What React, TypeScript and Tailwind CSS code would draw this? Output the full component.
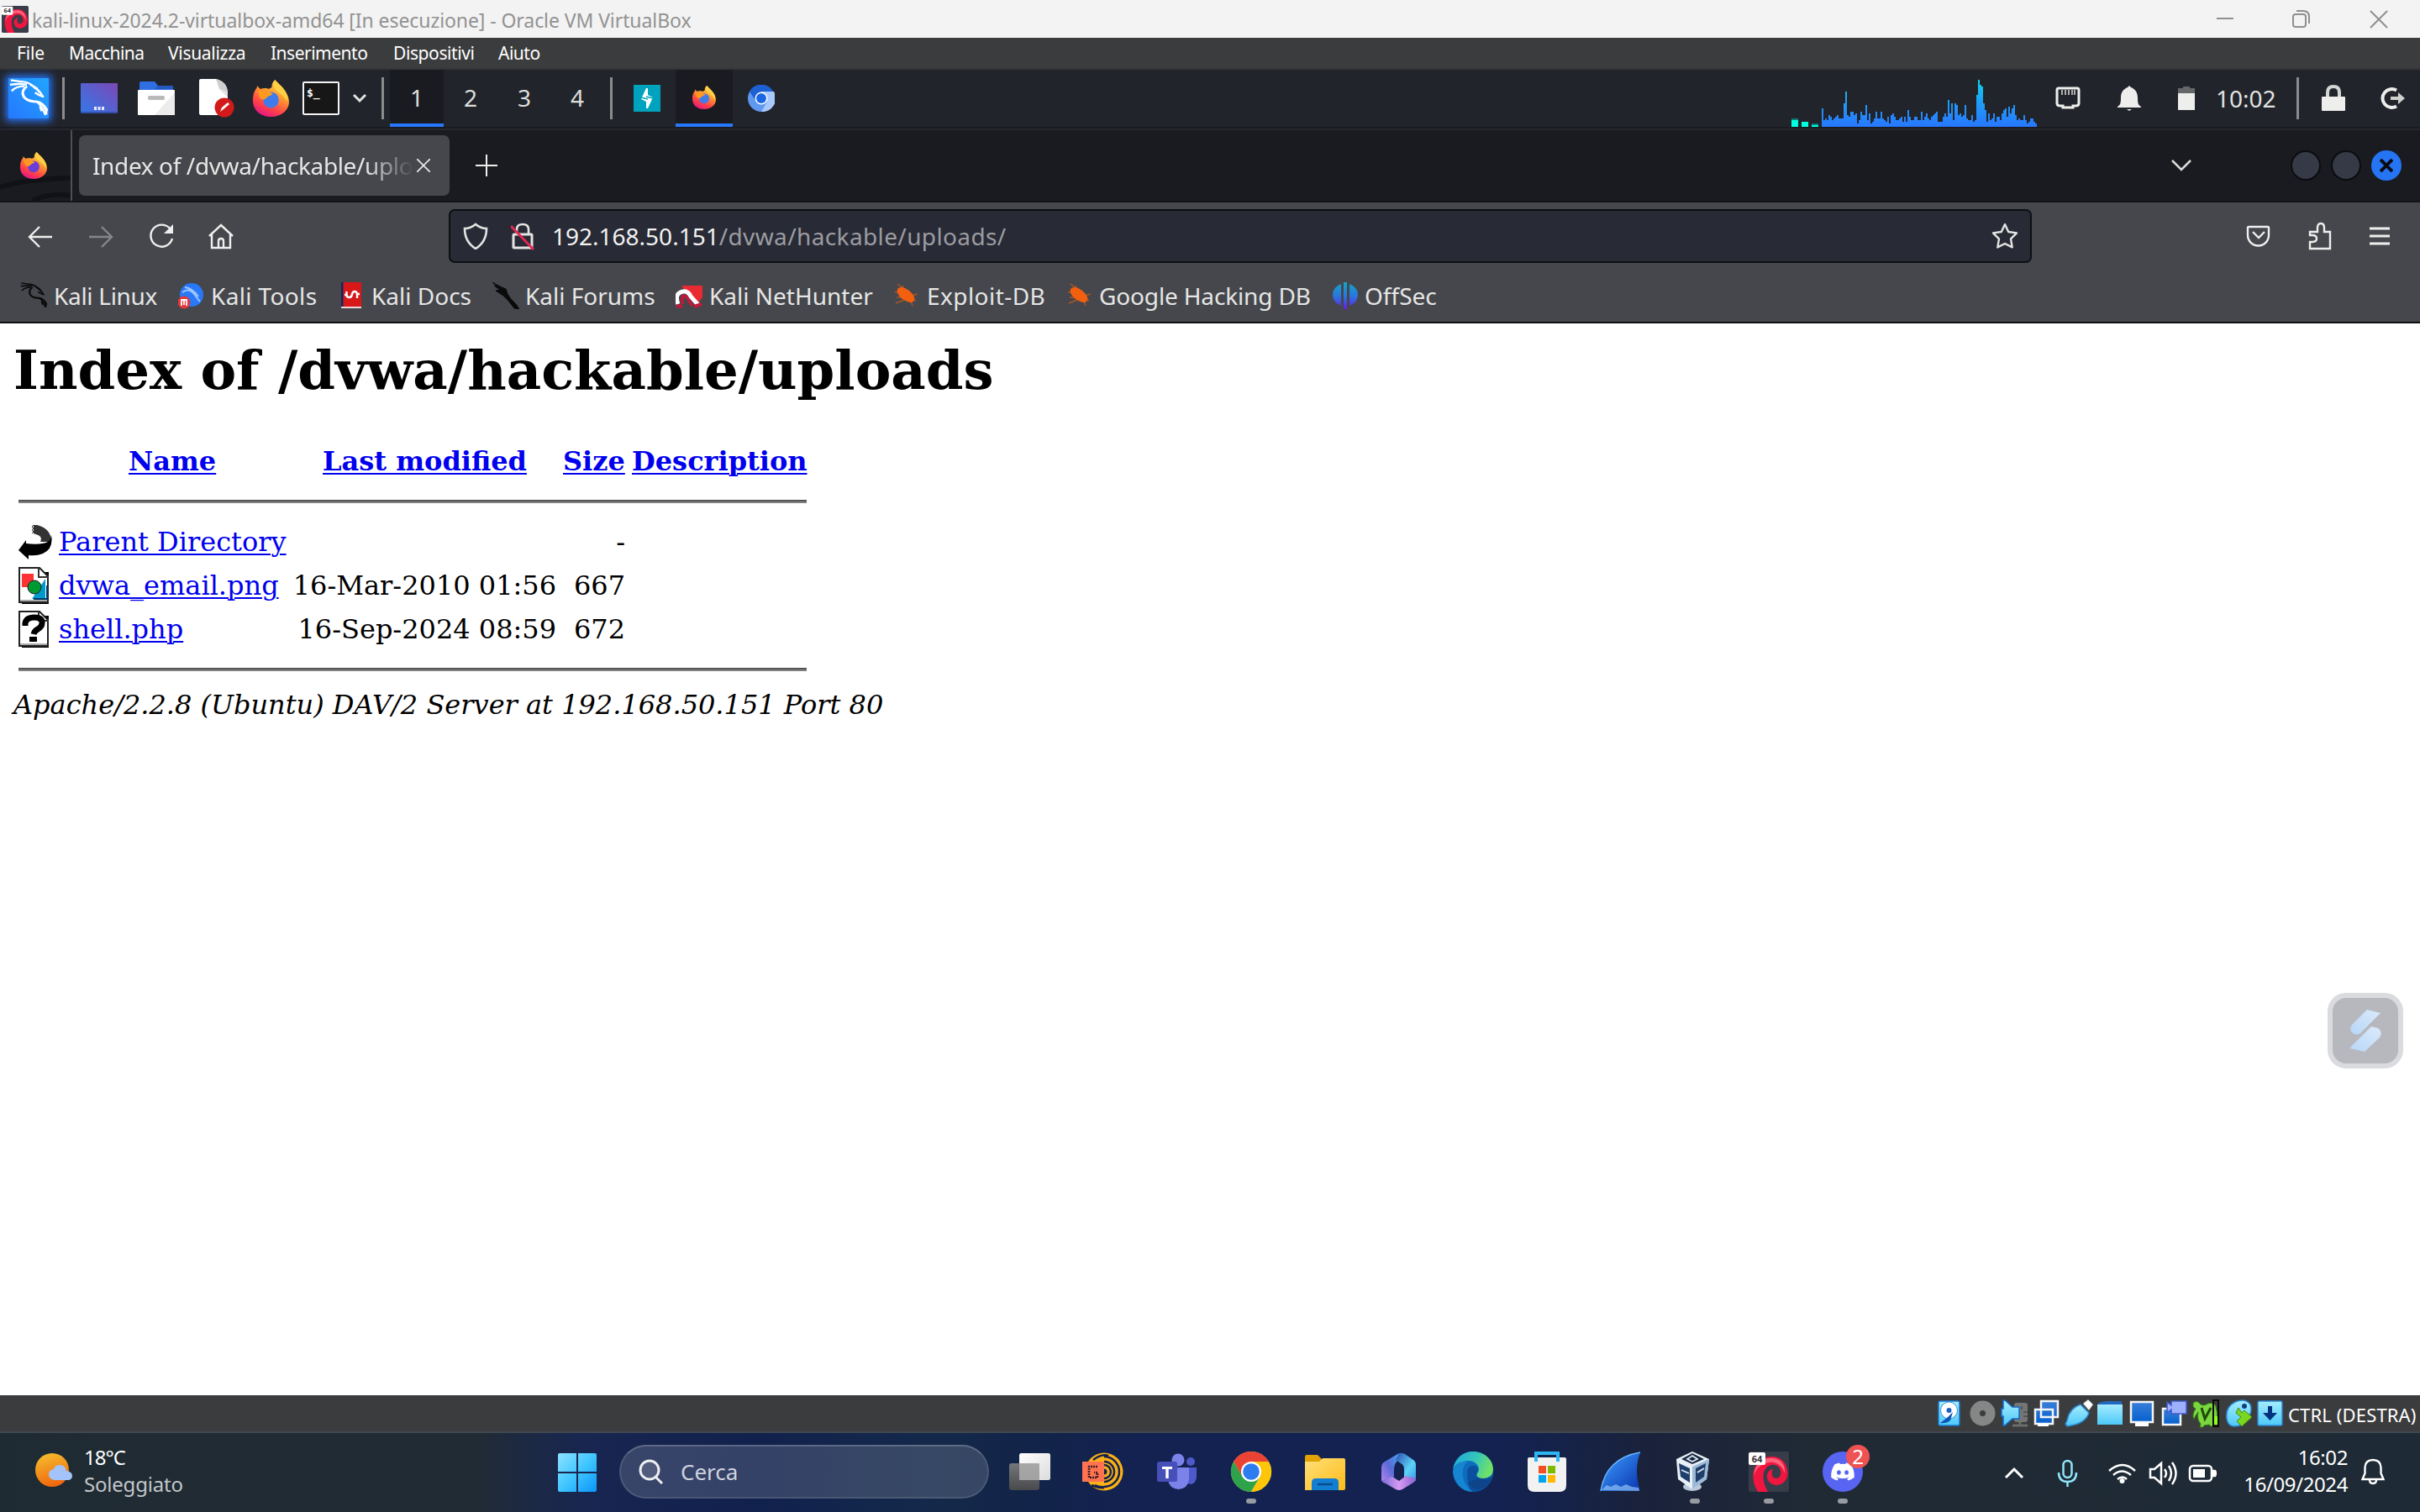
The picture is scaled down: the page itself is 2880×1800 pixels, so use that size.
import React from "react";
import { FaDiscord } from "react-icons/fa6";

const ui = "font-['Noto_Sans','Open_Sans',sans-serif]";

function Firefox({ className, core = "#3f7bea" }: { className: string; core?: string }) {
  return (
    <svg viewBox="0 0 44 44" className={className} preserveAspectRatio="none">
      <defs>
        <linearGradient id="ffBody" x1="0.8" y1="0" x2="0.3" y2="1">
          <stop offset="0" stopColor="#ffe14d" />
          <stop offset="0.4" stopColor="#ff9a2e" />
          <stop offset="0.75" stopColor="#ff3f4a" />
          <stop offset="1" stopColor="#e31587" />
        </linearGradient>
      </defs>
      <path
        d="M27 0c2 3 8 7 12 13 3 4 5 9 5 13 0 10-9 18-22 18S0 36 0 25c0-6 1-11 5-16v-2l4 4c2-1 4-1 6-1 2 0 3 0 4 1l4-2c0-4 1-7 4-9z"
        fill="url(#ffBody)"
      />
      <circle cx="22" cy="24" r="9.5" fill={core} />
      <path d="M7 12c5 0 7 3 10 3 4 0 6 0 7 2-2 2-5 2-6 3-2 3-5 4-7 3-3-1-5-6-4-11z" fill="#ff9a1f" />
      <path d="M27 0c2 3 8 7 12 13 3 4 4 9 3 13-2-4-5-6-8-9-4-3-9-6-9-11 0-2 1-4 2-6z" fill="#ffcf45" />
    </svg>
  );
}

function Dragon({ className }: { className: string }) {
  return (
    <svg viewBox="0 0 48 48" className={className} fill="none" stroke="currentColor" strokeLinejoin="round">
      <path d="M2 1.500L13 3q10 0 17 6 5 3 8 8M1 7l13-1 8 1M3 15q5-6 16-6M26 7l9 5" strokeWidth="2.600" />
      <path d="M30 10q7 3 12 12-6-2-10-5" strokeWidth="2.400" />
      <path d="M22 9q-8 6-4 13 3 5 12 6 9 0 13 6 3 5 3 10" strokeWidth="3.200" />
      <path d="M35 29q6 6 7 10l3 6M40 31q5 2 8 9M38 34l2 6" strokeWidth="2.200" />
    </svg>
  );
}

function Swirl({ className }: { className: string }) {
  return (
    <svg viewBox="0 0 48 48" className={className} preserveAspectRatio="none">
      <rect width="48" height="48" rx="2.5" fill="#393c49" />
      <path
        d="M11 48C3 36 3 19 14 11 22 4 37 4 43 14c6 10 4 21-5 25-7 3-15-1-16-8-1-5 3-10 7-10-2 4-2 10 3 11 5 0 7-4 6-9-1-6-8-9-14-6-8 5-9 17-1 31z"
        fill="#f21540"
      />
      <path d="M6 29C7 14 18 6 30 8c9 1 14 9 13 18C40 17 33 12 25 13 15 14 9 20 6 29z" fill="#ff7186" opacity=".85" />
      <rect x="0" y="1" width="20" height="15" rx="2" fill="#fff" />
      <text x="10" y="12.5" fontSize="11" fontWeight="700" textAnchor="middle" fill="#333" fontFamily="Open Sans">64</text>
    </svg>
  );
}

function TitleBar() {
  return (
    <div className={`${ui} flex h-[45px] items-center bg-[#f3f3f3]`}>
      <Swirl className="ml-[2px] h-8 w-8 shrink-0" />
      <span className="ml-[4px] mt-[2px] w-[2589px] whitespace-nowrap text-[23px] leading-[28px] tracking-[-0.08px] text-[#929292]">
        kali-linux-2024.2-virtualbox-amd64 [In esecuzione] - Oracle VM VirtualBox
      </span>
      <svg viewBox="0 0 220 28" className="h-7 w-[220px]" fill="none" stroke="#8f8f8f" strokeWidth="2">
        <path d="M11 13h20M194 4l20 20M214 4l-20 20" />
        <rect x="102" y="8" width="15" height="15" rx="3" />
        <path d="M106 4h8q7 0 7 7v8" />
      </svg>
    </div>
  );
}

function MenuBar() {
  const items = [
    ["File", "w-[62px]", "tracking-[-0.2px]"],
    ["Macchina", "w-[118px]", "tracking-[-0.6px]"],
    ["Visualizza", "w-[122px]", "tracking-[-0.3px]"],
    ["Inserimento", "w-[146px]", "tracking-[-0.5px]"],
    ["Dispositivi", "w-[125px]", "tracking-[-0.4px]"],
    ["Aiuto", "w-[80px]", "tracking-[-0.5px]"],
  ];
  return (
    <div className={`${ui} flex h-[38px] border-b-2 border-[#343536] bg-[#3b3c3d] pl-[20px]`}>
      {items.map(([t, w, k]) => (
        <span key={t} className={`${w} ${k} whitespace-nowrap text-[21px] leading-[36px] text-white`}>{t}</span>
      ))}
    </div>
  );
}

const bars = [
  11, 4, 5, 4, 7, 6, 4, 5, 6, 7, 5, 5, 5, 14, 21, 7, 6, 9, 9, 7, 8, 2, 4, 9, 7, 7, 13, 4, 8, 2, 3, 5, 9, 5, 5, 9,
  5, 4, 3, 6, 2, 7, 8, 6, 4, 4, 5, 6, 3, 6, 3, 10, 6, 4, 4, 6, 6, 4, 4, 9, 4, 6, 8, 5, 4, 6, 7, 8, 9, 3, 3, 3, 6,
  8, 6, 16, 8, 14, 4, 14, 13, 7, 8, 6, 7, 13, 5, 4, 4, 7, 3, 4, 19, 28, 25, 24, 14, 10, 3, 8, 4, 5, 8, 3, 6, 6, 4,
  8, 10, 11, 6, 12, 8, 11, 13, 7, 4, 5, 4, 4, 7, 4, 2, 3, 5, 5, 3, 2,
];

function CpuGraph() {
  return (
    <svg viewBox="0 0 292 68" className="ml-[1210px] h-[68px] w-[292px] shrink-0">
      <defs>
        <linearGradient id="cpu" x1="0" y1="10" x2="0" y2="68" gradientUnits="userSpaceOnUse">
          <stop offset="0" stopColor="#0ed9ec" />
          <stop offset="0.5" stopColor="#1f9cf5" />
          <stop offset="1" stopColor="#2777ff" />
        </linearGradient>
      </defs>
      <path d="M0 60h8v8H0zM12 62h8v6h-8zM24 66h8v2h-8z" fill="#00ffe0" />
      <path d="M0 58h8v2H0zM24 64h8v2h-8z" fill="#087d75" />
      <g fill="url(#cpu)">
        {bars.map((b, i) => (
          <rect key={i} x={36 + i * 2} y={68 - b * 2} width={2} height={b * 2} />
        ))}
      </g>
    </svg>
  );
}

function Divider({ className }: { className: string }) {
  return <div className={`${className} h-[50px] w-[3px] shrink-0 bg-[#8c8c8c]`} />;
}

function VmPanel() {
  return (
    <div className={`${ui} flex h-[70px] items-center border-b-2 border-[#1a1b21] bg-[#22242b]`}>
      <div className="ml-[10px] flex h-12 w-12 shrink-0 items-center justify-center bg-gradient-to-bl from-[#22a5ff] to-[#2777ff] shadow-[0_0_9px_3px_#2777ff]">
        <Dragon className="h-[46px] w-[46px] text-white" />
      </div>
      <Divider className="ml-[16px]" />
      <svg viewBox="0 0 44 36" className="ml-[19px] h-9 w-11 shrink-0">
        <defs>
          <linearGradient id="desk" x1="0" y1="1" x2="1" y2="0">
            <stop offset="0" stopColor="#3478ea" />
            <stop offset="1" stopColor="#7a49b5" />
          </linearGradient>
        </defs>
        <rect width="44" height="36" rx="1" fill="url(#desk)" />
        <path d="M0 34h44v2H0z" fill="#233f8c" opacity=".6" />
        <path d="M16 28h3v4h-3zM20.500 28h3v4h-3zM25 28h3v4h-3z" fill="#e8e8ff" />
      </svg>
      <svg viewBox="0 0 44 40" className="ml-[24px] h-10 w-11 shrink-0">
        <path d="M2 2q0-2 2-2h16l4 5h18v8H2z" fill="#2f6fe2" />
        <path d="M24 5h18v4H20z" fill="#2459bd" />
        <rect y="10" width="44" height="30" rx="1" fill="#fff" />
        <path d="M44 13v27H20z" fill="#ececec" />
        <rect x="12" y="17" width="20" height="5" rx="2" fill="#b9b9b9" />
      </svg>
      <svg viewBox="0 0 42 46" className="ml-[29px] h-[46px] w-[42px] shrink-0">
        <path d="M2 0h18q13 3 14 16v27H2q-2 0-2-2V2q0-2 2-2z" fill="#fff" />
        <path d="M20 0q13 3 14 16L24 12z" fill="#cfcfcf" />
        <path d="M24 12l10 4v6z" fill="#e2e2e2" />
        <circle cx="30" cy="34" r="11.500" fill="#d31a1a" />
        <path d="M25 39l2-5 7-6 2 2-7 6z" fill="#fff" />
      </svg>
      <Firefox className="ml-[22px] h-11 w-[43px] shrink-0" />
      <svg viewBox="0 0 44 40" className="ml-[16px] h-10 w-11 shrink-0">
        <rect x="1" y="1" width="42" height="38" rx="1" fill="#171717" stroke="#f4f4f4" strokeWidth="2" />
        <text x="5" y="18" fontSize="13" fontWeight="700" fill="#fff" fontFamily="DejaVu Sans Mono">$_</text>
      </svg>
      <svg viewBox="0 0 16 12" className="ml-[16px] h-3 w-4 shrink-0" fill="none" stroke="#e4e4e4" strokeWidth="3">
        <path d="M1 2l7 7 7-7" />
      </svg>
      <Divider className="ml-[18px]" />
      <div className="ml-[7px] flex h-[68px] shrink-0 text-[28px] leading-[66px] text-[#dededc]">
        <span className="w-16 border-b-4 border-[#2777ff] bg-[#1a1b20] text-center">1</span>
        <span className="w-16 text-center">2</span>
        <span className="w-16 text-center">3</span>
        <span className="w-[62px] text-center">4</span>
      </div>
      <Divider className="ml-[8px]" />
      <svg viewBox="0 0 32 32" className="ml-[25px] h-8 w-8 shrink-0">
        <rect width="32" height="32" fill="#00a3bd" />
        <path d="M15 4h2v8l6 3-6 13h-2v-8l-6-3z" fill="#fff" />
        <path d="M9 15l8 2M15 14l8 2" stroke="#00a3bd" strokeWidth="1.500" />
      </svg>
      <div className="ml-[18px] flex h-[68px] w-[68px] shrink-0 items-center justify-center border-b-4 border-[#2777ff] bg-[#1a1b20]">
        <Firefox className="mt-[2px] h-7 w-7" />
      </div>
      <svg viewBox="0 0 32 32" className="ml-[18px] h-8 w-8 shrink-0">
        <circle cx="16" cy="16" r="16" fill="#5f98f0" />
        <path d="M2 8a16 16 0 0 1 28 0z" fill="#1d60d4" />
        <path d="M16 8h15a16 16 0 0 1-15 24l7-12z" fill="#a9c9fb" />
        <path d="M2 8l8 12 6-12z" fill="#1d60d4" />
        <circle cx="16" cy="16" r="7.500" fill="#fff" />
        <circle cx="16" cy="16" r="6" fill="#1b66e5" />
      </svg>
      <CpuGraph />
      <svg viewBox="0 0 30 28" className="ml-[22px] h-7 w-[30px] shrink-0" fill="none" stroke="#eeeeec" strokeWidth="3">
        <path d="M4 2h22q2 0 2 2v16q0 3-4 3h-3v2H9v-2H6q-4 0-4-3V4q0-2 2-2z" />
        <path d="M8 4v6M12 4v6M16 4v6M20 4v6M23 4v6" strokeWidth="1.800" stroke="#bdbdbd" />
      </svg>
      <svg viewBox="0 0 28 30" className="ml-[44px] h-[30px] w-7 shrink-0" fill="#eeeeec">
        <path d="M14 0l2 2c5 2 8 6 8 12 0 8 1 9 4 11v1H0v-1c3-2 4-3 4-11 0-6 3-10 8-12zM11 28h6l-3 2z" />
      </svg>
      <svg viewBox="0 0 20 28" className="ml-[44px] h-7 w-5 shrink-0">
        <path d="M6 0h8v2h6v6H0V2h6z" fill="#666769" />
        <path d="M0 8h20v20H0z" fill="#eeeeec" />
      </svg>
      <span className="ml-[25px] w-[74px] shrink-0 text-[28px] leading-[66px] text-[#e2e2e0]">10:02</span>
      <Divider className="ml-[22px]" />
      <svg viewBox="0 0 28 32" className="ml-[27px] h-8 w-7 shrink-0">
        <path d="M7 14V9q0-7 7-7t7 7v5" fill="none" stroke="#d5d5d3" strokeWidth="4" />
        <rect y="14" width="28" height="17" rx="1" fill="#eeeeec" />
      </svg>
      <svg viewBox="0 0 30 28" className="ml-[41px] h-7 w-[30px] shrink-0">
        <path d="M20 4.500A11 11 0 1 0 20 23.500" fill="none" stroke="#eeeeec" strokeWidth="4" />
        <path d="M13 12h9V7l8 7-8 7v-5h-9z" fill="#cfcfcd" />
      </svg>
    </div>
  );
}

function TabBar() {
  return (
    <div className={`${ui} flex h-[88px] items-center border-t-2 border-b-2 border-t-[#26282e] border-b-[#121317] bg-[#1a1b20]`}>
      <div className="relative flex h-full w-[86px] shrink-0 items-center border-r-2 border-[#4e4f54]">
        <svg viewBox="0 0 86 30" className="absolute bottom-0 left-0 h-[30px] w-[84px]" fill="none" stroke="#111216" strokeWidth="6">
          <path d="M0 14C30 4 60 4 86 2M40 30q22-10 46-6" />
        </svg>
        <Firefox className="relative ml-[24px] h-8 w-8" core="#6a3fd8" />
      </div>
      <div className="ml-[8px] flex h-[72px] w-[441px] shrink-0 items-center rounded-[7px] bg-[#45474d]">
        <span className="ml-[16px] w-[386px] whitespace-nowrap text-[28px] leading-[40px] tracking-[-0.37px] text-[#e6e6e4] [mask-image:linear-gradient(to_right,black_84%,transparent_99%)]">
          Index of /dvwa/hackable/uplo
        </span>
        <svg viewBox="0 0 16 16" className="h-4 w-4" stroke="#e6e6e4" strokeWidth="1.800">
          <path d="M0 0l16 16M16 0L0 16" />
        </svg>
      </div>
      <svg viewBox="0 0 26 26" className="ml-[31px] h-[26px] w-[26px] shrink-0" stroke="#eeeeec" strokeWidth="2">
        <path d="M13 0v26M0 13h26" />
      </svg>
      <svg viewBox="0 0 24 14" className="ml-[1992px] h-[14px] w-6 shrink-0" fill="none" stroke="#dcdcda" strokeWidth="2.500">
        <path d="M1 1l11 11L23 1" />
      </svg>
      <div className="ml-[118px] flex gap-3">
        <span className="h-9 w-9 rounded-full border-2 border-[#0b0c0f] bg-[#363a46]" />
        <span className="h-9 w-9 rounded-full border-2 border-[#0b0c0f] bg-[#363a46]" />
        <span className="flex h-9 w-9 items-center justify-center rounded-full bg-[#2574f4]">
          <svg viewBox="0 0 16 16" className="h-4 w-4" stroke="#0b0c12" strokeWidth="4">
            <path d="M1 1l14 14M15 1L1 15" />
          </svg>
        </span>
      </div>
    </div>
  );
}

function NavBar() {
  return (
    <div className={`${ui} flex h-[80px] items-center bg-[#45474d]`}>
      <svg viewBox="0 0 246 32" className="ml-[33px] h-8 w-[246px] shrink-0" fill="none" stroke="#eeeeec" strokeWidth="2.400">
        <path d="M29 17H2M14 5L2 17l12 12" />
        <path d="M73 17h27M88 5l12 12-12 12" stroke="#85868a" />
        <path d="M170 8A13 13 0 1 0 172 19" />
        <path d="M173 2v11h-11z" fill="#eeeeec" stroke="none" />
        <path d="M216 16L230 3l14 13M219 14v16h22V14M227 30v-8q0-3 3-3t3 3v8" />
      </svg>
      <div className="ml-[255px] flex h-[64px] w-[1884px] shrink-0 items-center rounded-[7px] border-2 border-[#0e0f12] bg-[#282a36]">
        <svg viewBox="0 0 30 32" className="ml-[15px] h-8 w-[30px]" fill="none" stroke="#e4e4e2" strokeWidth="2.600">
          <path d="M15 2q6 5 13 5 0 16-13 24Q2 23 2 7q7 0 13-5z" />
        </svg>
        <svg viewBox="0 0 28 34" className="ml-[27px] h-[34px] w-7">
          <path d="M7 14V9q0-6 7-6t7 6v6" fill="none" stroke="#e4e4e2" strokeWidth="2.600" />
          <rect x="3" y="15" width="22" height="16" rx="1" fill="none" stroke="#e4e4e2" strokeWidth="3" />
          <path d="M0 5l27 28" stroke="#e22850" strokeWidth="3" />
        </svg>
        <span className="ml-[21px] w-[1699px] whitespace-nowrap text-[28px] leading-[40px] text-[#f2f2f0]">
          192.168.50.151<span className="tracking-[0.38px] text-[#9c9ca0]">/dvwa/hackable/uploads/</span>
        </span>
        <svg viewBox="0 0 32 32" className="ml-[14px] h-8 w-8" fill="none" stroke="#e4e4e2" strokeWidth="2.400" strokeLinejoin="round">
          <path d="M16 2l4.200 9 9.800 1.400-7 7 1.700 10L16 25l-8.700 4.400 1.700-10-7-7 9.800-1.400z" />
        </svg>
      </div>
      <svg viewBox="0 0 172 34" className="ml-[255px] h-[34px] w-[172px] shrink-0" fill="none" stroke="#eeeeec" strokeWidth="2.400">
        <path d="M4 6h22q1 0 1 1v9a12 12 0 0 1-25 0V7q0-1 2-1zM8 12l7 7 7-7" />
        <path d="M76 12h9V7q0-5 4-5t4 5v5h7v20H76v-8h3q5 0 5-4t-5-4h-3z" />
        <path d="M147 8h24M147 17h24M147 26h24" strokeWidth="3" />
      </svg>
    </div>
  );
}

function Bug() {
  return (
    <svg viewBox="0 0 30 30" className="h-[30px] w-[30px]">
      <path d="M4 2l10 8M1 12h8M2 25l10-4M28 14l-8 2M22 28l-2-5M10 4l4 8M26 22l-6-3M3 18h6" stroke="#a8562a" strokeWidth="1.500" />
      <ellipse cx="14" cy="15" rx="12" ry="6.500" transform="rotate(38 14 15)" fill="#f2600f" />
    </svg>
  );
}

function Bookmarks() {
  return (
    <div className={`${ui} flex h-[64px] items-start border-b-2 border-[#0e0f12] bg-[#45474d] pt-[12px] text-[28px] leading-[38px] whitespace-nowrap text-[#e6e6e4] [&>svg]:mt-[3px] [&>svg]:shrink-0 [&>span]:shrink-0`}>
      <Dragon className="ml-[24px] h-8 w-8 text-[#0a0a0a]" />
      <span className="ml-[8px] w-[148px] tracking-[-0.3px]">Kali Linux</span>
      <svg viewBox="0 0 30 32" className="h-8 w-[30px]">
        <circle cx="16" cy="15" r="14" fill="#2878f8" />
        <path d="M5 12q8-6 14 2t7 9M8 6q9 1 16 11" fill="none" stroke="#9fc6ff" strokeWidth="2" />
        <circle cx="7" cy="24" r="7.500" fill="#e3383a" />
        <path d="M4 28v-7h6v7M7 21v6" stroke="#fff" strokeWidth="1.800" fill="none" />
      </svg>
      <span className="ml-[9px] w-[155px] tracking-[0.35px]">Kali Tools</span>
      <svg viewBox="0 0 24 32" className="h-8 w-6">
        <rect x="2" width="22" height="29" fill="#d81818" />
        <path d="M0 0h2.500v29H0z" fill="#16245e" />
        <path d="M0 29h24v2H0z" fill="#e8d8d8" />
        <path d="M6.500 11v4q0 3 3 3t3.500-3.500 3-3.500 3 3v5M4 15h3M18 14h4" fill="none" stroke="#fff" strokeWidth="2.400" />
      </svg>
      <span className="ml-[12px] w-[144px]">Kali Docs</span>
      <svg viewBox="0 0 32 32" className="h-8 w-8" fill="#0a0a0a">
        <path d="M0 0l9 5 7 3 2 6 4 6 6 6 4 6-6-1-7-9-6-6-9-6 5-1-7-5 4 1z" stroke="#0a0a0a" />
      </svg>
      <span className="ml-[7px] w-[179px]">Kali Forums</span>
      <svg viewBox="0 0 32 32" className="h-8 w-8">
        <path d="M7 4h25v14L24 28z" fill="#ea2a31" />
        <path d="M3 26q-5-13 6-15 6-1 9 6l9 10" fill="none" stroke="#fff" strokeWidth="5" />
        <path d="M9 26q-3-9 1-10 3 0 6 6l4 6" fill="none" stroke="#c4183a" strokeWidth="3.500" />
        <path d="M1 28l7 1M22 29l9-3" stroke="#c4183a" strokeWidth="4" />
      </svg>
      <span className="ml-[8px] w-[220px]">Kali NetHunter</span>
      <Bug />
      <span className="ml-[9px] w-[167px] tracking-[0.45px]">Exploit-DB</span>
      <Bug />
      <span className="ml-[8px] w-[278px] tracking-[-0.15px]">Google Hacking DB</span>
      <svg viewBox="0 0 30 32" className="h-8 w-[30px]">
        <defs>
          <linearGradient id="os" x1="0" y1="0" x2="0" y2="1">
            <stop offset="0" stopColor="#14a7c4" />
            <stop offset=".55" stopColor="#2c72e0" />
            <stop offset="1" stopColor="#6a1be0" />
          </linearGradient>
        </defs>
        <path d="M10 2v26Q0 24 0 15T10 2zM13 0h4v32h-4zM20 2q10 4 10 13T20 28z" fill="url(#os)" />
      </svg>
      <span className="ml-[8px]">OffSec</span>
    </div>
  );
}

function DocIcon({ children }: { children: React.ReactNode }) {
  return (
    <svg viewBox="0 0 40 44" className="h-11 w-10 shrink-0">
      <path d="M4 6h32v38H4z" fill="#000" />
      <path d="M1 1h24l10 10v31H1z" fill="#fff" stroke="#222" strokeWidth="2" />
      <path d="M2 39h32v2H2z" fill="#aaa" />
      <path d="M24 1v11h12" fill="none" stroke="#333" strokeWidth="2" />
      {children}
    </svg>
  );
}

const link = "text-[#0000ee] underline decoration-2 underline-offset-[3px]";

function Page() {
  const hr = "h-1 w-[938px] border-b-2 border-[#808080] bg-[#555555]";
  return (
    <div className="relative h-[1276px] bg-white pl-[22px] font-['DejaVu_Serif',serif] text-[32px] text-black">
      <h1 className="-ml-[6px] whitespace-nowrap pt-[18px] text-[64px] font-bold leading-[75px]">Index of /dvwa/hackable/uploads</h1>
      <div className="mt-[53px] flex whitespace-nowrap font-bold leading-[37px]">
        <span className="ml-[131px] w-[231px]"><a className={link}>Name</a></span>
        <span className="w-[286px]"><a className={link}>Last modified</a></span>
        <span className="w-[82px]"><a className={link}>Size</a></span>
        <span><a className={link}>Description</a></span>
      </div>
      <div className={`mt-[27px] ${hr}`} />
      <div className="mt-[24px] whitespace-nowrap leading-[45px]">
        <div className="flex h-[52px]">
          <svg viewBox="0 0 40 44" className="h-11 w-10 shrink-0">
            <path d="M16 2h6q14 3 17 16v4H26q4-8-10-10z" fill="#333" />
            <path d="M16 2l2 2-2 2 2 2-2 2 2 2-2 2" stroke="#fff" fill="none" />
            <path d="M39 14q3 16-10 22-7 3-17 2v5L0 32l9-12v4q18 2 26-2 4-3 4-8z" fill="#000" />
          </svg>
          <a className={`ml-[8px] w-[300px] ${link}`}>Parent Directory</a>
          <span className="w-[374px] text-right">-</span>
        </div>
        <div className="flex h-[52px]">
          <DocIcon>
            <path d="M4 8h14v16H4z" fill="#f33" />
            <path d="M32 14v24H16z" fill="#09c" />
            <path d="M18 38h16V22" fill="none" stroke="#00396b" strokeWidth="2" />
            <circle cx="19" cy="24" r="8" fill="#093" stroke="#222" />
          </DocIcon>
          <a className={`ml-[8px] w-[264px] ${link}`}>dvwa_email.png</a>
          <span className="w-[328px] text-right">16-Mar-2010 01:56</span>
          <span className="w-[82px] text-right">667</span>
        </div>
        <div className="flex h-[52px]">
          <DocIcon>
            <path d="M8 18v-3q1-7 11-7t9 7q0 4-5 7-4 2-5 6" fill="none" stroke="#000" strokeWidth="7" />
            <path d="M13 31h9v6h-9z" />
          </DocIcon>
          <a className={`ml-[8px] w-[264px] ${link}`}>shell.php</a>
          <span className="w-[328px] text-right">16-Sep-2024 08:59</span>
          <span className="w-[82px] text-right">672</span>
        </div>
      </div>
      <div className={`mt-[16px] ${hr}`} />
      <address className="-ml-[6px] mt-[22px] whitespace-nowrap italic leading-[37px]">
        Apache/2.2.8 (Ubuntu) DAV/2 Server at 192.168.50.151 Port 80
      </address>
      <div className="absolute right-5 top-[797px] flex h-[90px] w-[90px] items-center justify-center rounded-[22px] border-[6px] border-[#dadbdf] bg-[#b7b8bd]">
        <svg viewBox="0 0 38 50" className="h-[50px] w-[38px]">
          <defs>
            <linearGradient id="fl" x1="1" y1="0" x2="0" y2="1">
              <stop offset="0" stopColor="#dceafa" />
              <stop offset="1" stopColor="#b6d6f8" />
            </linearGradient>
          </defs>
          <path d="M21 0l16 4-24 24q-4 3-9 0-5-4-1-10z" fill="url(#fl)" />
          <path d="M0 46l26-26 8 2q6 5 2 11L18 50z" fill="url(#fl)" />
        </svg>
      </div>
    </div>
  );
}

function VBoxStatus() {
  return (
    <div className={`${ui} flex h-[43px] items-start bg-[#3b3c3d] pt-[5px] pl-[2304px]`}>
      <svg viewBox="0 0 418 34" className="h-[34px] w-[418px] shrink-0">
        <defs>
          <linearGradient id="lb" x1="0" y1="0" x2="0" y2="1">
            <stop offset="0" stopColor="#a6ecff" />
            <stop offset="1" stopColor="#4cc9f8" />
          </linearGradient>
          <linearGradient id="db" x1="0" y1="0" x2="0" y2="1">
            <stop offset="0" stopColor="#3a7fd8" />
            <stop offset="1" stopColor="#0560cf" />
          </linearGradient>
        </defs>
        <rect x="3" y="2" width="25" height="29" rx="2" fill="url(#lb)" stroke="#1a76cf" strokeWidth="1.500" />
        <circle cx="15.500" cy="13" r="10" fill="#fff" stroke="#3a8fd8" />
        <circle cx="15.500" cy="13" r="3" fill="#1d62c4" />
        <path d="M5 28l8-6 7-7-3 10q-5 4-12 3z" fill="#0e55b8" />
        <circle cx="55.500" cy="16.500" r="15" fill="#858786" />
        <circle cx="55.500" cy="16.500" r="3.500" fill="#3b3c3d" />
        <rect x="93" y="4" width="16" height="23" rx="3" fill="#747675" />
        <path d="M97 8v4M102 8v4M104 15h5M104 20h5" stroke="#4b4d4c" strokeWidth="1.500" />
        <path d="M100 27v4M91 31h18" stroke="#6b6d6c" strokeWidth="3" />
        <path d="M80 1h2l9 8h8v14h-8l-9 8h-2V20h-2v-9h2z" fill="url(#lb)" stroke="#1568c8" strokeWidth="1.500" />
        <g fill="url(#db)" stroke="#f6f6f6" strokeWidth="2.500">
          <path d="M125 2h20v19h-20zM118 12h21v17h-21z" />
          <path d="M232 3h26v24h-26z" />
          <path d="M270 11h21v19h-21z" />
        </g>
        <path d="M121 29h13v3h-13zM237 28h16v4h-16z" fill="#fff" />
        <path d="M175 5l6-5 6 6-5 7z" fill="#fff" stroke="#888" />
        <path d="M172 6l10 10q-4 12-21 15l-5 1-2-3 2-4Q159 10 172 6z" fill="url(#lb)" stroke="#2b85cf" strokeWidth="1.500" />
        <path d="M193 4l10-2h18v6h-28z" fill="#2368bf" />
        <path d="M192 6h30v24h-30z" fill="url(#lb)" />
        <path d="M275 3l5 4V2h18v15h-18v-5l-5 4z" fill="#9fb0ff" stroke="#3f58c8" strokeWidth="1.500" />
        <path d="M306 4q5-4 9 2l4 1q14-8 15 6 3 10-5 16l3 3h-5l-2-2-6 1-1 2h-4l1-4q-5-5-3-14-4 5-5 9-3-6 2-13l-3-2z" fill="#7bd63f" stroke="#2f7a10" />
        <path d="M316 10l4 13 7-13" fill="none" stroke="#1f4a0b" strokeWidth="3" />
        <path d="M330 1h6v31h-6z" fill="none" stroke="#0a0a0a" strokeWidth="2" />
        <path d="M331 20h4v10h-4z" fill="#8dff1a" />
        <path d="M346 23q-2-14 10-20 12-5 18 3 3 8-3 17-7 10-17 9-7-1-8-9z" fill="url(#lb)" stroke="#2b85cf" strokeWidth="1.500" />
        <path d="M360 10l4 6 3-3 9 8-12 11-6-6 5-5-6-5z" fill="#7bd61f" stroke="#3f8a10" />
        <circle cx="367" cy="8" r="3" fill="#123f80" />
        <rect x="383" y="2" width="29" height="29" rx="2" fill="url(#lb)" stroke="#2b85cf" strokeWidth="1.500" />
        <path d="M395 8h5v8h6l-8.500 9-8.500-9h6z" fill="#04317f" />
      </svg>
      <span className="whitespace-nowrap pl-[1px] text-[22px] leading-[36px] tracking-[0.15px] text-white">CTRL (DESTRA)</span>
    </div>
  );
}

function DockApp({ children, dot }: { children: React.ReactNode; dot?: boolean }) {
  return (
    <div className="flex w-[88px] shrink-0 flex-col items-center">
      <svg viewBox="0 0 48 48" className="mt-[22px] h-12 w-12 overflow-visible">{children}</svg>
      {dot && <span className="mt-[8px] h-[6px] w-3 rounded-full bg-[#989ba2]" />}
    </div>
  );
}

function TaskbarApps() {
  return (
    <>
      <DockApp>
        <defs>
          <linearGradient id="wp" x1="0" y1="0" x2="1" y2="1"><stop offset="0" stopColor="#fff" /><stop offset="1" stopColor="#dcdcdc" /></linearGradient>
          <linearGradient id="gy" x1="0" y1="0" x2="0" y2="1"><stop offset="0" stopColor="#7d7d7d" /><stop offset="1" stopColor="#4c4c4c" /></linearGradient>
          <linearGradient id="fo" x1="0" y1="0" x2="1" y2="1"><stop offset="0" stopColor="#ffe07a" /><stop offset="1" stopColor="#fdbb17" /></linearGradient>
          <linearGradient id="ed" x1="0" y1="0" x2="1" y2="0.3"><stop offset="0" stopColor="#1ba6df" /><stop offset=".6" stopColor="#35c6b8" /><stop offset="1" stopColor="#6fe06a" /></linearGradient>
          <linearGradient id="m3" x1="1" y1="0" x2="0" y2="1"><stop offset="0" stopColor="#4aa3ee" /><stop offset=".5" stopColor="#5a6ad8" /><stop offset="1" stopColor="#b887ee" /></linearGradient>
          <linearGradient id="m4" x1="0" y1="0" x2="1" y2="0"><stop offset="0" stopColor="#7a6fd8" /><stop offset=".5" stopColor="#d69af2" /><stop offset="1" stopColor="#8a62cf" /></linearGradient>
          <linearGradient id="m5" x1="0" y1="0" x2="1" y2="1"><stop offset="0" stopColor="#2a4bb0" /><stop offset=".6" stopColor="#5cd3f7" /><stop offset="1" stopColor="#3d8fe8" /></linearGradient>
          <linearGradient id="ws" x1="0" y1="0" x2="1" y2="1"><stop offset="0" stopColor="#3ea0ff" /><stop offset="1" stopColor="#0a35b0" /></linearGradient>
        </defs>
        <rect x="12" y="2" width="37" height="32" rx="2.500" fill="url(#wp)" />
        <rect x="0" y="14" width="36" height="32" rx="3" fill="url(#gy)" opacity=".93" />
        <path d="M12 14h24v20H12z" fill="#b0b0b0" opacity=".8" />
      </DockApp>
      <DockApp>
        <circle cx="25" cy="24" r="22.500" fill="#fbb116" />
        <path d="M25 6a18 18 0 0 1 0 36M25 12a12 12 0 0 1 0 24M12 10q10-8 18-5M10 40q10 4 15 3M14 40q6 3 11 2" fill="none" stroke="#15224c" strokeWidth="2.500" />
        <circle cx="25" cy="24" r="8" fill="#fbb116" stroke="#15224c" strokeWidth="2.500" />
        <circle cx="25" cy="24" r="3.500" fill="#15224c" />
        <rect x="-1" y="12" width="26" height="24" fill="#ff7350" />
        <path d="M17 18H7v13h10v-6h-4" fill="none" stroke="#3c1d24" strokeWidth="2.600" strokeDasharray="2 1" />
      </DockApp>
      <DockApp>
        <circle cx="25" cy="10" r="7.500" fill="#7b83eb" />
        <circle cx="40" cy="12" r="5" fill="#5059c9" />
        <path d="M34 19h13v12q-1 7-7 8-6-1-6-6z" fill="#5059c9" />
        <path d="M13 19h25v14q-1 11-12.500 12Q14 44 13 33z" fill="#7b83eb" />
        <rect x="0" y="12" width="24" height="24" rx="2.500" fill="#4650b8" />
        <path d="M6 18h12v3h-4.300v11h-3.400V21H6z" fill="#fff" />
      </DockApp>
      <DockApp dot>
        <circle cx="24" cy="24" r="24" fill="#ffcd40" />
        <path d="M24 12h20.800A24 24 0 0 0 3.200 12l10.400 18z" fill="#ea4335" />
        <path d="M3.200 12A24 24 0 0 0 24 48l10.400-18H13.600z" fill="#2fa24c" />
        <path d="M44.800 12A24 24 0 0 1 24 48l10.400-18L24 12z" fill="#fdc60b" />
        <circle cx="24" cy="24" r="12" fill="#fff" />
        <circle cx="24" cy="24" r="9.800" fill="#2d7df0" />
      </DockApp>
      <DockApp>
        <path d="M0 6q0-2 2-2h13l5 5v8H0z" fill="#e2a105" />
        <path d="M0 12h17l4-4h25q2 0 2 2v34q0 2-2 2H0z" fill="url(#fo)" />
        <path d="M8 46V37q0-5 5-5h22q5 0 5 5v9z" fill="#127ed2" />
        <path d="M15 39h18" stroke="#0a4d8c" strokeWidth="2.500" />
      </DockApp>
      <DockApp>
        <path d="M24 2L7 12Q3 14 3 19v14q0 3 3 4l12-7v-9q0-6 5-11z" fill="url(#m3)" />
        <path d="M24 2q4-1 7 1l10 7q3 2 3 6v17q0 2-2 3l-12-6v-9q0-5-4-7l-6-4z" fill="url(#m5)" />
        <path d="M4 34q0 3 4 4l12 7q4 2 8 0l13-8q3-2 3-5l-12-3-8 6-8-5z" fill="url(#m4)" />
      </DockApp>
      <DockApp>
        <circle cx="24" cy="24" r="24" fill="#0e6cbd" />
        <path d="M0 22C2 8 12 0 24 0c14 0 24 10 24 21 0 7-5 11-12 11-5 0-8-2-8-4s3-3 3-7c0-5-5-10-13-10C9 11 2 16 0 22z" fill="url(#ed)" />
        <path d="M17 24c0-4 3-7 7-7 5 0 7 3 5 8-2 4 0 7 7 7 5 0 9-2 11-4l-1 5c-4 9-12 15-22 15-5-2-7-12-7-24z" fill="#0c4f9e" />
        <path d="M0 24q4-12 18-13-8 7-6 19 2 12 12 18Q4 47 0 24z" fill="#1686d2" />
        <path d="M30 32q6 3 16 0-5 12-16 13-9-1-12-8z" fill="#132250" opacity=".25" />
      </DockApp>
      <DockApp>
        <path d="M11 12V2h26v10" fill="none" stroke="#2db7f2" strokeWidth="4" />
        <path d="M1 9q0-2 2-2h42q2 0 2 2v31q0 8-8 8H9q-8 0-8-8z" fill="#f2f2f2" />
        <path d="M11 12V6M37 12V6" stroke="#2db7f2" strokeWidth="4" />
        <path d="M14 17h9v9h-9z" fill="#f25022" />
        <path d="M25 17h9v9h-9z" fill="#7fba00" />
        <path d="M14 28h9v9h-9z" fill="#00a4ef" />
        <path d="M25 28h9v9h-9z" fill="#ffb900" />
      </DockApp>
      <DockApp>
        <path d="M0 47Q6 8 47 1q-8 22 0 46z" fill="url(#ws)" />
        <path d="M0 47Q6 8 47 1" fill="none" stroke="#68b4ff" strokeWidth="1.500" />
        <path d="M1 46l6-6 5 2 6-3 6 3 6-3 7 3 8 1 1 4z" fill="#8fc2f5" opacity=".7" />
      </DockApp>
      <DockApp dot>
        <ellipse cx="21" cy="42" rx="11" ry="5" fill="#b9c8da" />
        <path d="M2 9L21 0l20 9-3 24-17 12L4 33z" fill="#e9f0f7" />
        <path d="M41 9l-3 24-17 12V18z" fill="#9db9d8" />
        <path d="M8 9l13-7 14 7-14 6z" fill="#16283f" />
        <path d="M5 14l13 6v17L7 30zM37 14l-12 6v17l10-7z" fill="#1f3f6a" />
        <path d="M15 9l6-4 6 4-6 3zM8 22l9 4M27 25l8-5" stroke="#dfe9f4" fill="none" strokeWidth="1.800" />
      </DockApp>
      <div className="flex w-[88px] shrink-0 flex-col items-center">
        <Swirl className="mt-[22px] h-12 w-12" />
        <span className="mt-[8px] h-[6px] w-3 rounded-full bg-[#989ba2]" />
      </div>
      <div className="relative flex w-[88px] shrink-0 flex-col items-center">
        <div className="mt-[22px] flex h-12 w-12 items-center justify-center rounded-full bg-[#5865f2]">
          <FaDiscord className="h-[30px] w-[30px] text-white" />
        </div>
        <span className="mt-[8px] h-[6px] w-3 rounded-full bg-[#989ba2]" />
        <span className="absolute left-[48px] top-[14px] h-7 w-7 rounded-full bg-[#ed5353] text-center text-[24px] leading-[28px] text-white">2</span>
      </div>
    </>
  );
}

function Taskbar() {
  return (
    <div className={`${ui} flex h-24 border-t-2 border-[#404850] bg-[linear-gradient(90deg,#1f2b33_0px,#212b33_560px,#182650_690px,#11214d_900px,#14294a_1120px,#122448_1220px,#132250_1340px,#132250_1800px,#1a223c_1950px,#1f2a35_2150px,#1e2a35_2880px)] text-[24px] text-white`}>
      <svg viewBox="0 0 46 42" className="ml-[41px] mt-[24px] h-[42px] w-[46px] shrink-0">
        <defs>
          <linearGradient id="sun" x1=".3" y1="0" x2=".6" y2="1"><stop offset="0" stopColor="#f5bb2d" /><stop offset="1" stopColor="#f0640c" /></linearGradient>
        </defs>
        <circle cx="21" cy="20" r="20" fill="url(#sun)" />
        <path d="M24 32q-7-1-7-7 0-5 6-6 1-5 7-5 7 0 8 7 7 1 7 6 0 4-4 5z" fill="#a3c3fa" />
      </svg>
      <div className="ml-[13px] mt-[13px] w-[564px] shrink-0 leading-[32px]">
        <div className="tracking-[-1px]">18°C</div>
        <div className="tracking-[-0.2px] text-[#c3c6c9]">Soleggiato</div>
      </div>
      <svg viewBox="0 0 46 46" className="mt-[24px] h-[46px] w-[46px] shrink-0">
        <defs>
          <linearGradient id="win" x1="0" y1="0" x2="1" y2="1"><stop offset="0" stopColor="#8ee2ff" /><stop offset=".5" stopColor="#41c7ff" /><stop offset="1" stopColor="#0a95f8" /></linearGradient>
        </defs>
        <path d="M2 0h20v22H0V2q0-2 2-2zM24 0h20q2 0 2 2v20H24zM0 24h22v22H2q-2 0-2-2zM24 24h22v20q0 2-2 2H24z" fill="url(#win)" />
      </svg>
      <div className="ml-[27px] mt-[14px] flex h-[64px] w-[440px] shrink-0 items-center rounded-full border-2 border-white/10 border-t-white/20 bg-white/15">
        <svg viewBox="0 0 30 30" className="ml-[21px] h-[30px] w-[30px]" fill="#ffffff22" stroke="#eceef2" strokeWidth="3">
          <circle cx="13" cy="13" r="11" />
          <path d="M20 21l8 8" />
        </svg>
        <span className="ml-[20px] mt-[1px] text-[26px] text-[#cfd3de]">Cerca</span>
      </div>
      <div className="ml-[4px] flex shrink-0"><TaskbarApps /></div>
      <svg viewBox="0 0 254 40" className="ml-[147px] mt-[28px] h-10 w-[254px] shrink-0" fill="none" stroke="#fff" strokeWidth="2.500">
        <path d="M3 25l10-10 10 10" strokeWidth="3" />
        <g stroke="#8fe5f8"><rect x="71.500" y="5" width="10" height="20" rx="5" /><path d="M66 19q0 11 10.500 11T87 19M76.500 30v6" /></g>
        <path d="M126 17q16-14 31 0M131 22q10-9 21 0M136 27q6-5 11 0" />
        <circle cx="141.500" cy="29" r="3" fill="#fff" stroke="none" />
        <path d="M175 15h5l8-7v24l-8-7h-5zM192 15q4 5 0 10M197 11q6 9 0 18M201 7q9 13 0 26" />
        <rect x="222" y="11" width="26" height="18" rx="4" />
        <path d="M226 15h14v10h-14z" fill="#fff" stroke="none" />
        <path d="M249 17h3q2 3 0 6h-3z" fill="#fff" />
      </svg>
      <div className="mt-[13px] w-[156px] shrink-0 text-right leading-[32px] tracking-[-0.4px]">
        <div>16:02</div>
        <div>16/09/2024</div>
      </div>
      <svg viewBox="0 0 28 32" className="ml-[16px] mt-[30px] h-8 w-7 shrink-0" fill="none" stroke="#fff" strokeWidth="2.400">
        <path d="M14 2q9 0 9.500 9v7l3 7h-25l3-7v-7Q5 2 14 2zM10 26q0 4 4 4t4-4" />
      </svg>
    </div>
  );
}

export default function App() {
  return (
    <div className="h-[1800px] w-[2880px] overflow-hidden bg-white">
      <TitleBar />
      <MenuBar />
      <VmPanel />
      <TabBar />
      <NavBar />
      <Bookmarks />
      <Page />
      <VBoxStatus />
      <Taskbar />
    </div>
  );
}
